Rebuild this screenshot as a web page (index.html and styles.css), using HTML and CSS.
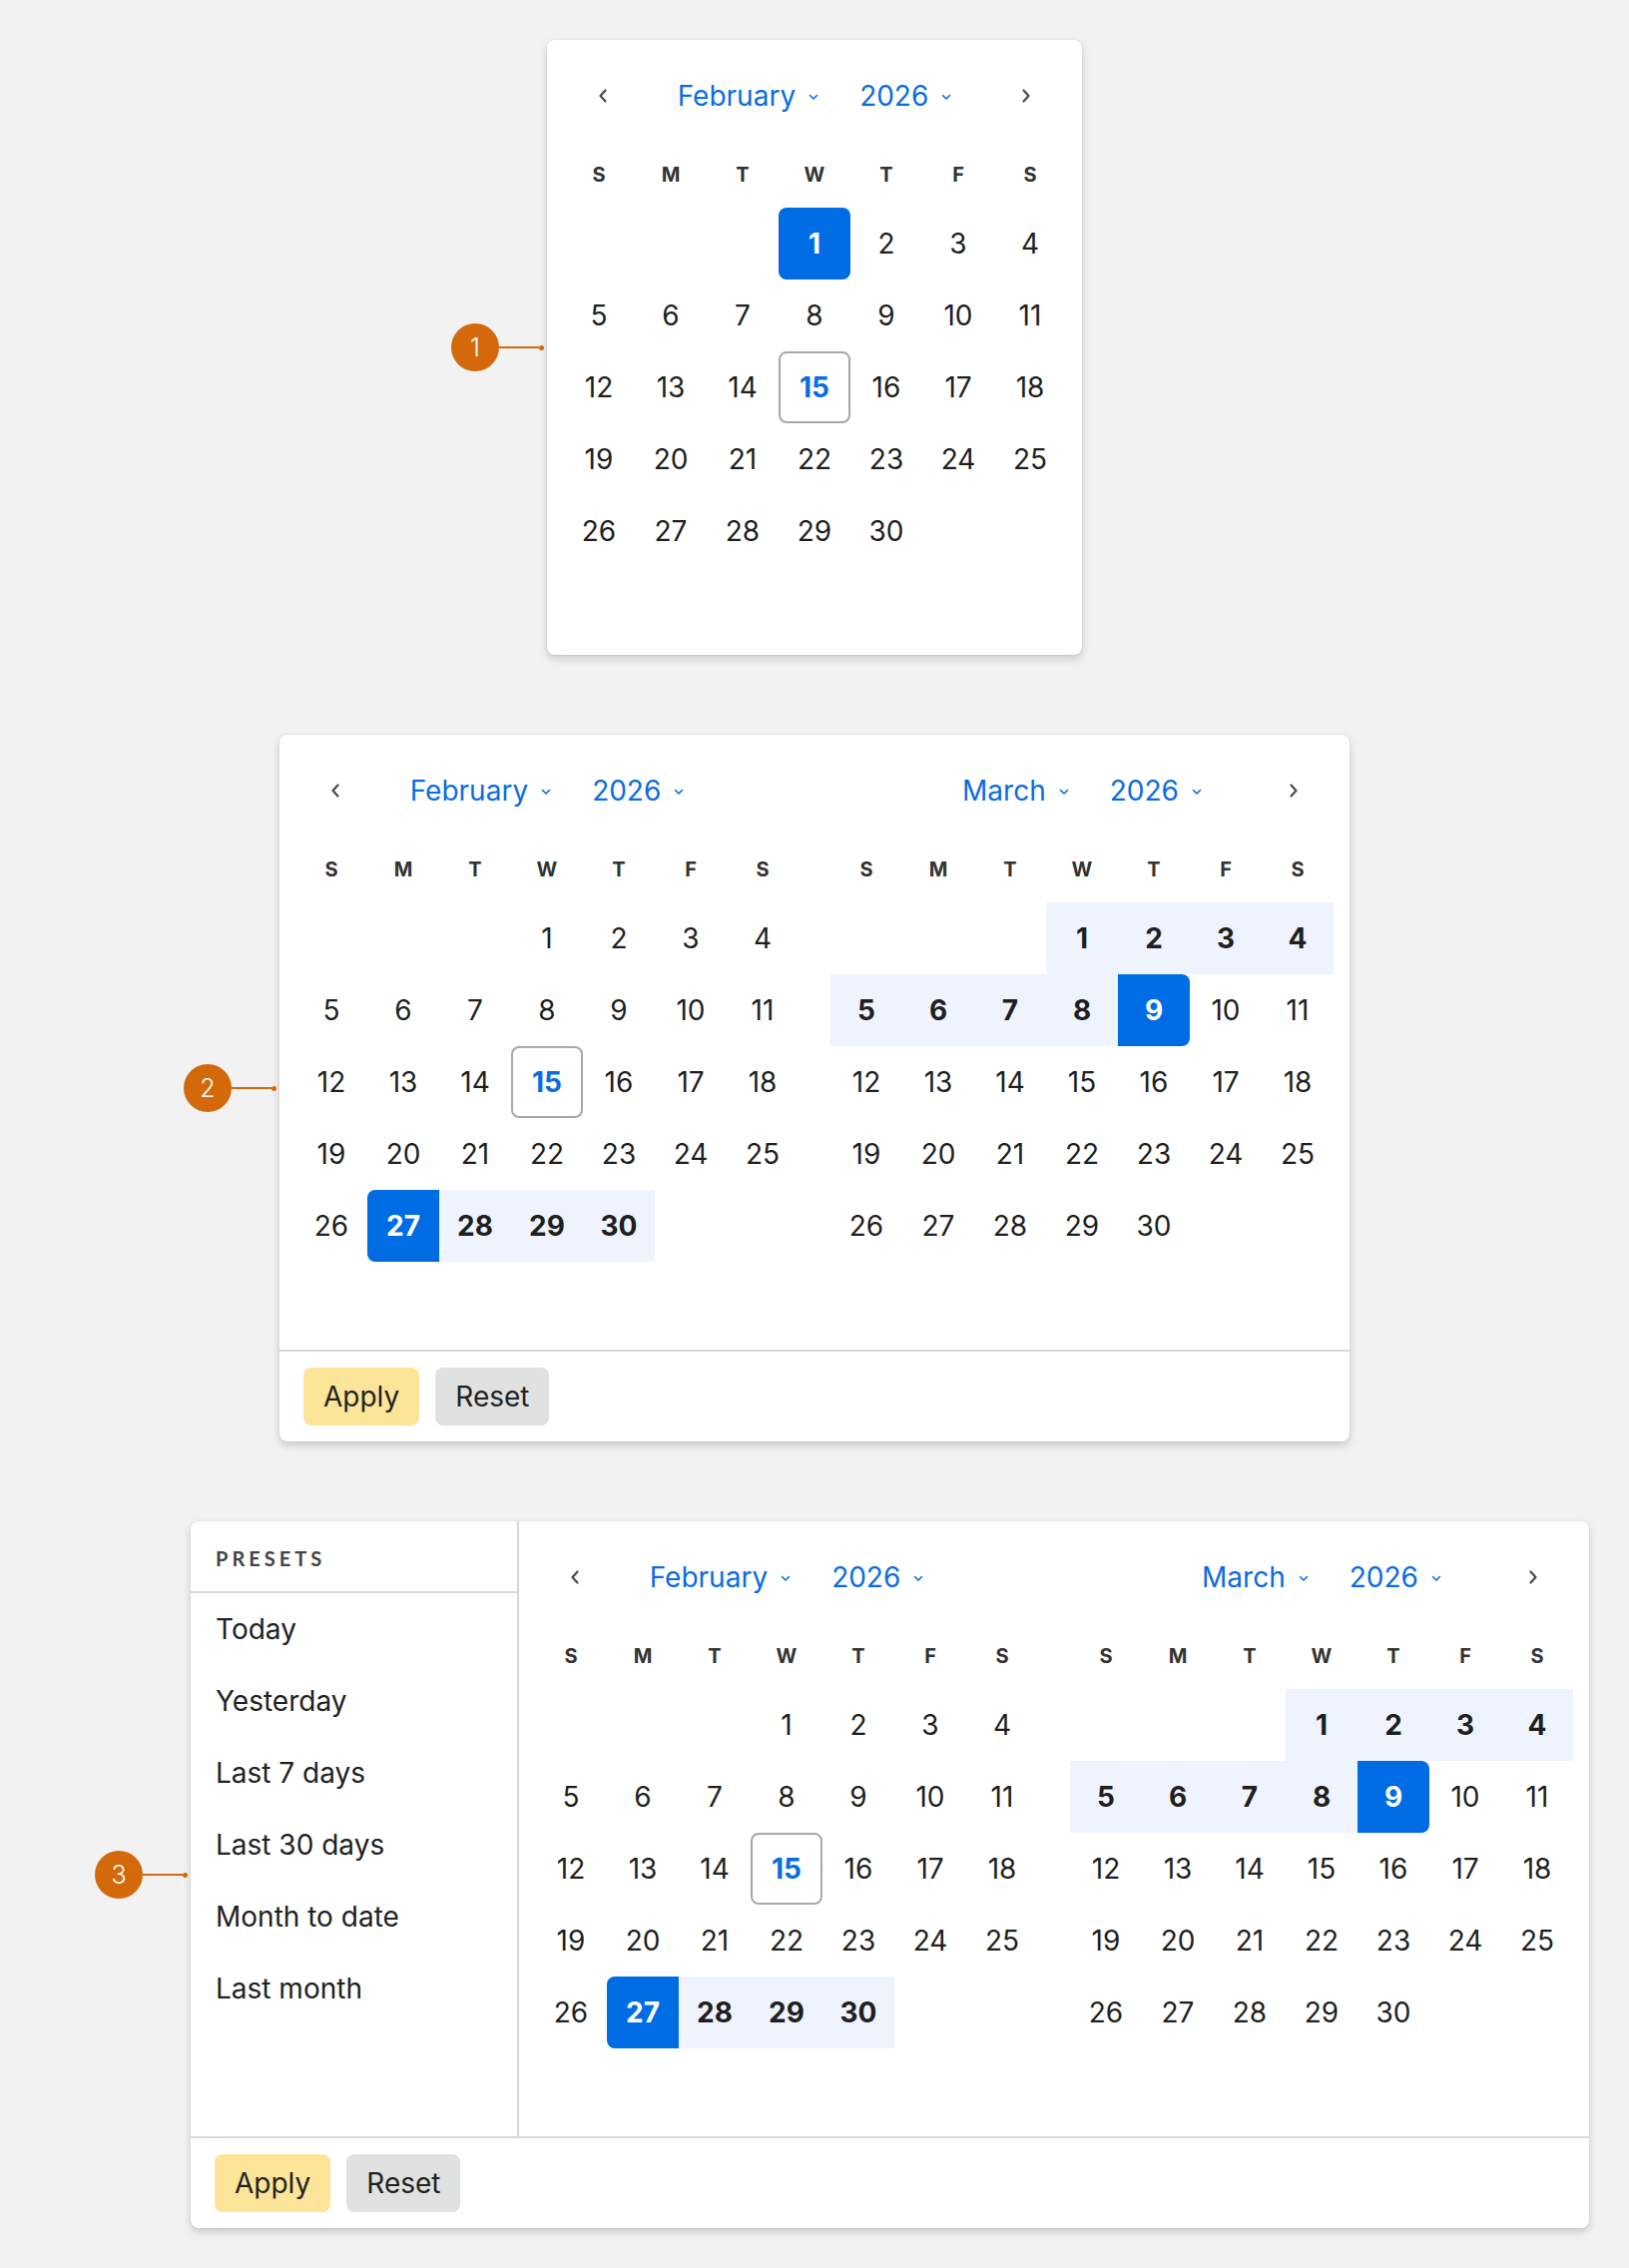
FILE: index.html
```html
<!DOCTYPE html>
<html lang="en">
<head>
<meta charset="utf-8">
<title>Date pickers</title>
<link rel="stylesheet" href="styles.css">
</head>
<body>
<main class="page">

  <!-- 1: single date picker -->
  <section class="picker picker-single">
    <div class="marker"><span class="marker-num">1</span><span class="marker-line"></span><span class="marker-dot"></span></div>
    <div class="months">
      <div class="month">
        <div class="cal-head">
          <button class="nav"><svg width="12" height="18" viewBox="0 0 12 18"><path d="M8.5 3.5 L3.5 9 L8.5 14.5"/></svg></button>
          <div class="title">
            <span class="select">February<svg class="caret" width="10" height="7" viewBox="0 0 10 7"><path d="M1.5 1.5 L5 5 L8.5 1.5"/></svg></span>
            <span class="select">2026<svg class="caret" width="10" height="7" viewBox="0 0 10 7"><path d="M1.5 1.5 L5 5 L8.5 1.5"/></svg></span>
          </div>
          <button class="nav"><svg width="12" height="18" viewBox="0 0 12 18"><path d="M3.5 3.5 L8.5 9 L3.5 14.5"/></svg></button>
        </div>
        <div class="weekdays"><span>S</span><span>M</span><span>T</span><span>W</span><span>T</span><span>F</span><span>S</span></div>
        <div class="days">
          <span></span><span></span><span></span><span class="d sel single">1</span><span class="d">2</span><span class="d">3</span><span class="d">4</span>
          <span class="d">5</span><span class="d">6</span><span class="d">7</span><span class="d">8</span><span class="d">9</span><span class="d">10</span><span class="d">11</span>
          <span class="d">12</span><span class="d">13</span><span class="d">14</span><span class="d today">15</span><span class="d">16</span><span class="d">17</span><span class="d">18</span>
          <span class="d">19</span><span class="d">20</span><span class="d">21</span><span class="d">22</span><span class="d">23</span><span class="d">24</span><span class="d">25</span>
          <span class="d">26</span><span class="d">27</span><span class="d">28</span><span class="d">29</span><span class="d">30</span>
        </div>
      </div>
    </div>
  </section>

  <!-- 2: range picker -->
  <section class="picker picker-range">
    <div class="marker"><span class="marker-num">2</span><span class="marker-line"></span><span class="marker-dot"></span></div>
    <div class="months">
      <div class="month">
        <div class="cal-head">
          <button class="nav"><svg width="12" height="18" viewBox="0 0 12 18"><path d="M8.5 3.5 L3.5 9 L8.5 14.5"/></svg></button>
          <div class="title">
            <span class="select">February<svg class="caret" width="10" height="7" viewBox="0 0 10 7"><path d="M1.5 1.5 L5 5 L8.5 1.5"/></svg></span>
            <span class="select">2026<svg class="caret" width="10" height="7" viewBox="0 0 10 7"><path d="M1.5 1.5 L5 5 L8.5 1.5"/></svg></span>
          </div>
          <span class="nav-spacer"></span>
        </div>
        <div class="weekdays"><span>S</span><span>M</span><span>T</span><span>W</span><span>T</span><span>F</span><span>S</span></div>
        <div class="days">
          <span></span><span></span><span></span><span class="d">1</span><span class="d">2</span><span class="d">3</span><span class="d">4</span>
          <span class="d">5</span><span class="d">6</span><span class="d">7</span><span class="d">8</span><span class="d">9</span><span class="d">10</span><span class="d">11</span>
          <span class="d">12</span><span class="d">13</span><span class="d">14</span><span class="d today">15</span><span class="d">16</span><span class="d">17</span><span class="d">18</span>
          <span class="d">19</span><span class="d">20</span><span class="d">21</span><span class="d">22</span><span class="d">23</span><span class="d">24</span><span class="d">25</span>
          <span class="d">26</span><span class="d sel start">27</span><span class="d range">28</span><span class="d range">29</span><span class="d range">30</span>
        </div>
      </div>
      <div class="month">
        <div class="cal-head">
          <span class="nav-spacer"></span>
          <div class="title">
            <span class="select">March<svg class="caret" width="10" height="7" viewBox="0 0 10 7"><path d="M1.5 1.5 L5 5 L8.5 1.5"/></svg></span>
            <span class="select">2026<svg class="caret" width="10" height="7" viewBox="0 0 10 7"><path d="M1.5 1.5 L5 5 L8.5 1.5"/></svg></span>
          </div>
          <button class="nav"><svg width="12" height="18" viewBox="0 0 12 18"><path d="M3.5 3.5 L8.5 9 L3.5 14.5"/></svg></button>
        </div>
        <div class="weekdays"><span>S</span><span>M</span><span>T</span><span>W</span><span>T</span><span>F</span><span>S</span></div>
        <div class="days">
          <span></span><span></span><span></span><span class="d range">1</span><span class="d range">2</span><span class="d range">3</span><span class="d range">4</span>
          <span class="d range">5</span><span class="d range">6</span><span class="d range">7</span><span class="d range">8</span><span class="d sel end">9</span><span class="d">10</span><span class="d">11</span>
          <span class="d">12</span><span class="d">13</span><span class="d">14</span><span class="d">15</span><span class="d">16</span><span class="d">17</span><span class="d">18</span>
          <span class="d">19</span><span class="d">20</span><span class="d">21</span><span class="d">22</span><span class="d">23</span><span class="d">24</span><span class="d">25</span>
          <span class="d">26</span><span class="d">27</span><span class="d">28</span><span class="d">29</span><span class="d">30</span>
        </div>
      </div>
    </div>
    <div class="footer">
      <button class="btn btn-apply">Apply</button>
      <button class="btn btn-reset">Reset</button>
    </div>
  </section>

  <!-- 3: range picker with presets -->
  <section class="picker picker-presets">
    <div class="marker"><span class="marker-num">3</span><span class="marker-line"></span><span class="marker-dot"></span></div>
    <div class="body">
      <aside class="presets">
        <div class="presets-title">PRESETS</div>
        <ul class="preset-list">
          <li>Today</li>
          <li>Yesterday</li>
          <li>Last 7 days</li>
          <li>Last 30 days</li>
          <li>Month to date</li>
          <li>Last month</li>
        </ul>
      </aside>
      <div class="months">
        <div class="month">
          <div class="cal-head">
            <button class="nav"><svg width="12" height="18" viewBox="0 0 12 18"><path d="M8.5 3.5 L3.5 9 L8.5 14.5"/></svg></button>
            <div class="title">
              <span class="select">February<svg class="caret" width="10" height="7" viewBox="0 0 10 7"><path d="M1.5 1.5 L5 5 L8.5 1.5"/></svg></span>
              <span class="select">2026<svg class="caret" width="10" height="7" viewBox="0 0 10 7"><path d="M1.5 1.5 L5 5 L8.5 1.5"/></svg></span>
            </div>
            <span class="nav-spacer"></span>
          </div>
          <div class="weekdays"><span>S</span><span>M</span><span>T</span><span>W</span><span>T</span><span>F</span><span>S</span></div>
          <div class="days">
            <span></span><span></span><span></span><span class="d">1</span><span class="d">2</span><span class="d">3</span><span class="d">4</span>
            <span class="d">5</span><span class="d">6</span><span class="d">7</span><span class="d">8</span><span class="d">9</span><span class="d">10</span><span class="d">11</span>
            <span class="d">12</span><span class="d">13</span><span class="d">14</span><span class="d today">15</span><span class="d">16</span><span class="d">17</span><span class="d">18</span>
            <span class="d">19</span><span class="d">20</span><span class="d">21</span><span class="d">22</span><span class="d">23</span><span class="d">24</span><span class="d">25</span>
            <span class="d">26</span><span class="d sel start">27</span><span class="d range">28</span><span class="d range">29</span><span class="d range">30</span>
          </div>
        </div>
        <div class="month">
          <div class="cal-head">
            <span class="nav-spacer"></span>
            <div class="title">
              <span class="select">March<svg class="caret" width="10" height="7" viewBox="0 0 10 7"><path d="M1.5 1.5 L5 5 L8.5 1.5"/></svg></span>
              <span class="select">2026<svg class="caret" width="10" height="7" viewBox="0 0 10 7"><path d="M1.5 1.5 L5 5 L8.5 1.5"/></svg></span>
            </div>
            <button class="nav"><svg width="12" height="18" viewBox="0 0 12 18"><path d="M3.5 3.5 L8.5 9 L3.5 14.5"/></svg></button>
          </div>
          <div class="weekdays"><span>S</span><span>M</span><span>T</span><span>W</span><span>T</span><span>F</span><span>S</span></div>
          <div class="days">
            <span></span><span></span><span></span><span class="d range">1</span><span class="d range">2</span><span class="d range">3</span><span class="d range">4</span>
            <span class="d range">5</span><span class="d range">6</span><span class="d range">7</span><span class="d range">8</span><span class="d sel end">9</span><span class="d">10</span><span class="d">11</span>
            <span class="d">12</span><span class="d">13</span><span class="d">14</span><span class="d">15</span><span class="d">16</span><span class="d">17</span><span class="d">18</span>
            <span class="d">19</span><span class="d">20</span><span class="d">21</span><span class="d">22</span><span class="d">23</span><span class="d">24</span><span class="d">25</span>
            <span class="d">26</span><span class="d">27</span><span class="d">28</span><span class="d">29</span><span class="d">30</span>
          </div>
        </div>
      </div>
    </div>
    <div class="footer">
      <button class="btn btn-apply">Apply</button>
      <button class="btn btn-reset">Reset</button>
    </div>
  </section>

</main>
</body>
</html>
```

FILE: styles.css
```css
* { box-sizing: border-box; }

html, body {
  margin: 0;
  padding: 0;
  background: #f2f2f2;
}

body {
  font-family: Inter, "Noto Sans", "Liberation Sans", sans-serif;
  color: #1f1f1f;
}

.page {
  width: 1632px;
  padding: 40px 0;
  display: flex;
  flex-direction: column;
  align-items: center;
  gap: 80px;
}

.picker {
  position: relative;
  background: #ffffff;
  border-radius: 8px;
  box-shadow: 0 4px 9px rgba(0, 0, 0, 0.17), 0 0 2px rgba(0, 0, 0, 0.10);
}

.picker-presets {
  margin-left: 151px;
}

/* annotation marker */
.marker {
  position: absolute;
  right: 100%;
  top: 50%;
  transform: translateY(-50%);
  width: 96px;
  display: flex;
  align-items: center;
}

.marker-num {
  flex: none;
  width: 48px;
  height: 48px;
  border-radius: 50%;
  background: #d3690b;
  color: #ffffff;
  font-size: 25px;
  font-weight: 300;
  display: flex;
  align-items: center;
  justify-content: center;
}

.marker-line {
  flex: 1;
  height: 2px;
  background: #d3690b;
}

.marker-dot {
  flex: none;
  width: 5px;
  height: 5px;
  border-radius: 50%;
  background: #d3690b;
  margin-right: 3px;
}

/* months */
.months {
  display: flex;
  gap: 32px;
  padding: 16px;
}

.month {
  width: 504px;
}

.cal-head {
  height: 80px;
  display: grid;
  grid-template-columns: 80px 1fr 80px;
  align-items: center;
}

.nav {
  border: 0;
  background: transparent;
  padding: 0;
  height: 40px;
  display: flex;
  align-items: center;
  justify-content: center;
}

.nav svg path {
  fill: none;
  stroke: #4a4a4a;
  stroke-width: 2.2;
  stroke-linecap: round;
  stroke-linejoin: round;
}

.title {
  display: flex;
  justify-content: center;
  align-items: center;
  gap: 41px;
}

.select {
  display: flex;
  align-items: center;
  color: #0a6ce2;
  font-size: 28px;
  line-height: 40px;
}

.caret {
  margin-left: 13px;
  margin-top: 2px;
}

.caret path {
  fill: none;
  stroke: #0a6ce2;
  stroke-width: 1.6;
  stroke-linecap: round;
  stroke-linejoin: round;
}

.weekdays {
  display: grid;
  grid-template-columns: repeat(7, 72px);
  height: 72px;
  padding-top: 5px;
  align-items: center;
}

.weekdays span {
  text-align: center;
  font-size: 20px;
  font-weight: 700;
  color: #333333;
}

.days {
  display: grid;
  grid-template-columns: repeat(7, 72px);
  grid-template-rows: repeat(6, 72px);
}

.d {
  display: flex;
  align-items: center;
  justify-content: center;
  font-size: 28px;
  color: #1f1f1f;
}

.d.range {
  background: #eef3fd;
  font-weight: 700;
}

.d.sel {
  background: #006ce4;
  color: #ffffff;
  font-weight: 700;
}

.d.sel.single { border-radius: 8px; }
.d.sel.start { border-radius: 8px 0 0 8px; }
.d.sel.end { border-radius: 0 8px 8px 0; }

.d.today {
  border: 2px solid #a8a8a8;
  border-radius: 8px;
  color: #0a6ce2;
  font-weight: 700;
}

/* footer */
.footer {
  border-top: 2px solid #d9d9d9;
  padding: 16px 24px;
  display: flex;
  gap: 16px;
}

.btn {
  font-family: Inter, "Noto Sans", "Liberation Sans", sans-serif;
  font-size: 28px;
  height: 58px;
  padding: 0 20px;
  border: 0;
  border-radius: 8px;
  color: #222222;
}

.btn-apply { background: #fce599; }
.btn-reset { background: #e0e1e1; }

/* presets */
.body {
  display: flex;
}

.presets {
  width: 329px;
  border-right: 2px solid #d6d6d6;
}

.presets-title {
  height: 72px;
  border-bottom: 2px solid #d9d9d9;
  padding-left: 25px;
  padding-top: 4px;
  display: flex;
  align-items: center;
  font-family: Lato, "Liberation Sans", sans-serif;
  font-weight: 700;
  font-size: 20px;
  letter-spacing: 4px;
  color: #444444;
}

.preset-list {
  list-style: none;
  margin: 0;
  padding: 0;
}

.preset-list li {
  height: 72px;
  padding-left: 25px;
  display: flex;
  align-items: center;
  font-size: 28px;
  color: #222222;
}
```
